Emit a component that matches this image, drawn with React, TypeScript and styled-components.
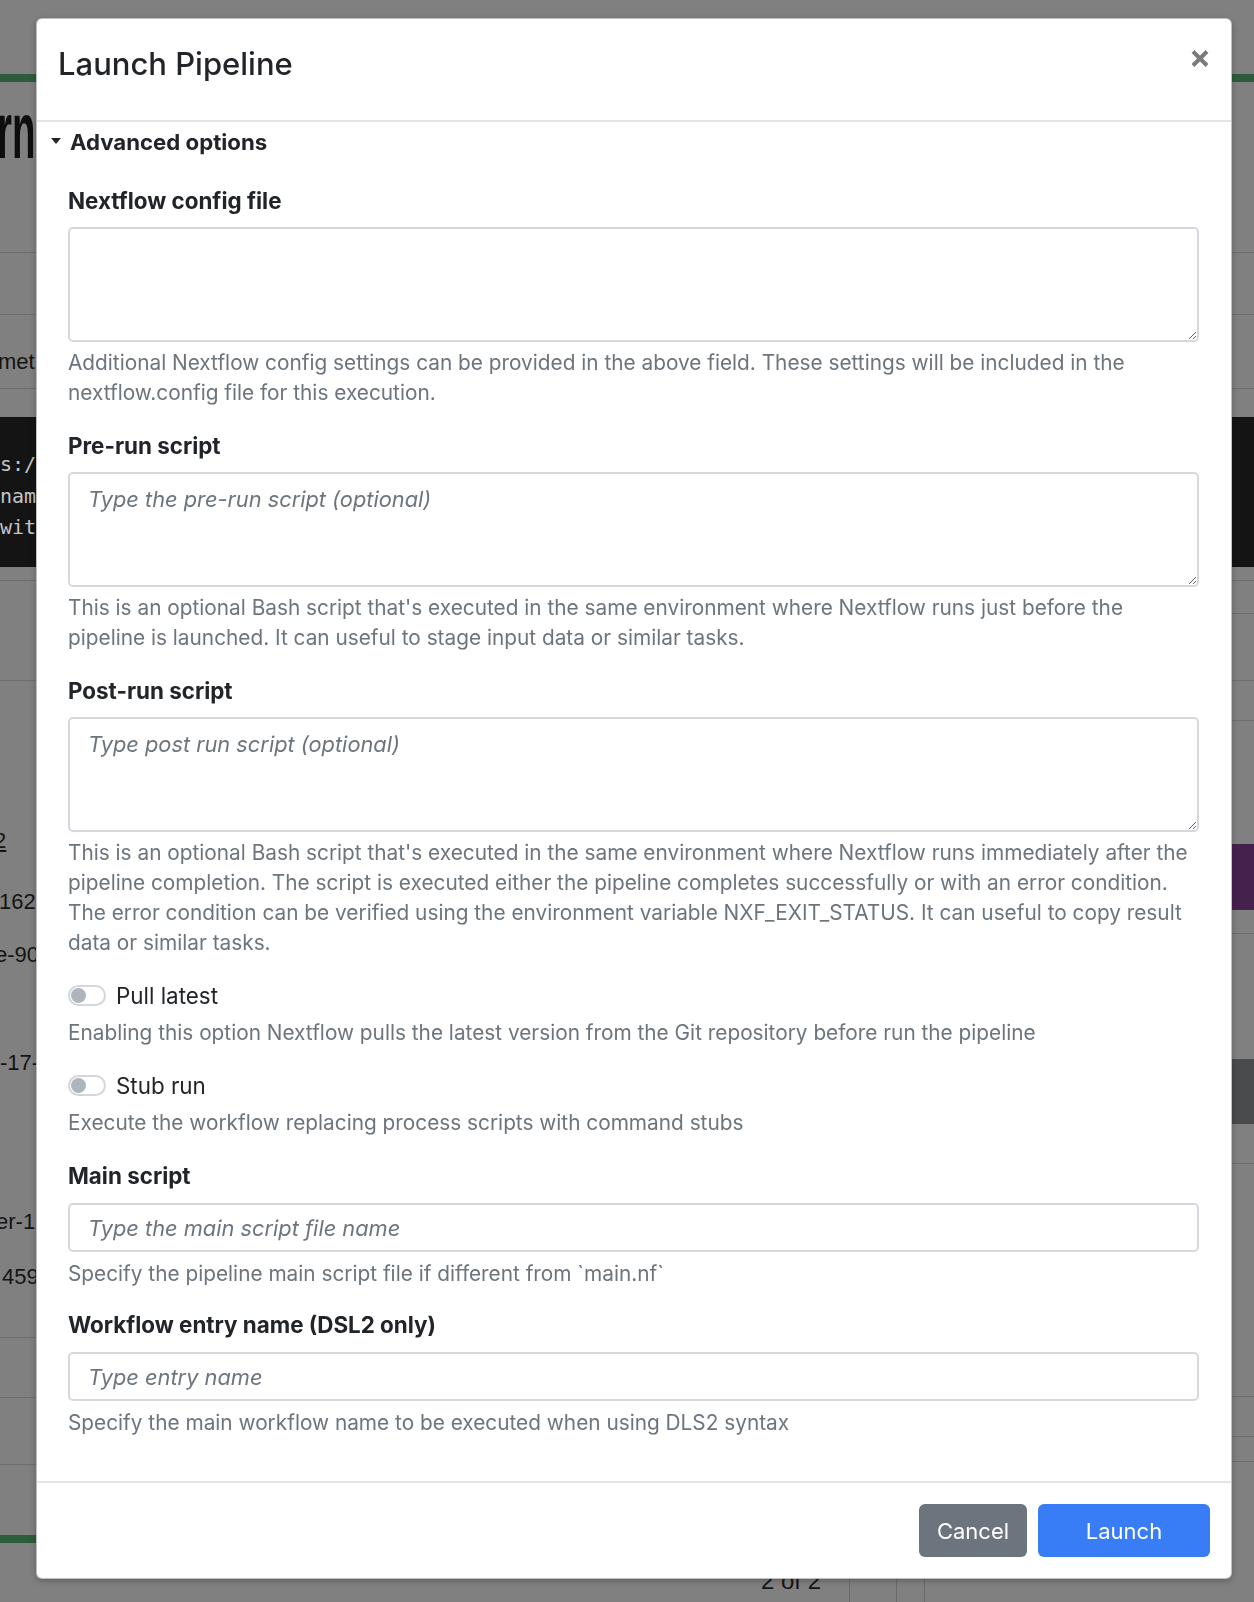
import React from "react";
import styled, { createGlobalStyle } from "styled-components";

const GlobalStyle = createGlobalStyle`
  html, body { margin: 0; padding: 0; }
  body {
    width: 1254px;
    height: 1602px;
    overflow: hidden;
    background: #808080;
    font-family: Inter, "Noto Sans", sans-serif;
  }
  #root { height: 100%; }
  * { box-sizing: border-box; }
`;

/* ---------- dimmed page behind the modal ---------- */

const Page = styled.div`
  display: grid;
  grid-template-columns: 36px 1fr 22px;
  height: 1602px;
  background: #808080;
`;

const Rail = styled.div`
  display: flex;
  flex-direction: column;
  overflow: hidden;
`;

const Gap = styled.div<{ $h: number }>`
  height: ${(p) => p.$h}px;
  flex-shrink: 0;
`;

const Rule = styled.div`
  height: 1px;
  flex-shrink: 0;
  background: #6d6d6d;
`;

const Band = styled.div<{ $h: number; $bg: string }>`
  height: ${(p) => p.$h}px;
  flex-shrink: 0;
  background: ${(p) => p.$bg};
`;

const CodeBand = styled.div`
  height: 150px;
  flex-shrink: 0;
  background: #141414;
  padding-top: 32px;
  display: flex;
  flex-direction: column;
`;

const CodeLine = styled.div`
  font-family: "DejaVu Sans Mono", "Liberation Mono", monospace;
  font-size: 20px;
  line-height: 31.5px;
  color: #c4c4c4;
  white-space: nowrap;
`;

const BigHeading = styled.div`
  font-family: "Liberation Sans", Arial, sans-serif;
  font-size: 80px;
  font-weight: 700;
  line-height: 60px;
  height: 60px;
  color: #0e0e0e;
  white-space: nowrap;
  transform: scaleX(0.48);
  transform-origin: left center;
  margin-left: -3px;
`;

const CellText = styled.div<{ $shift?: number; $underline?: boolean }>`
  font-family: "Liberation Sans", Arial, sans-serif;
  font-size: 22px;
  line-height: 30px;
  height: 30px;
  color: #141414;
  white-space: nowrap;
  margin-left: ${(p) => p.$shift ?? 0}px;
  text-decoration: ${(p) => (p.$underline ? "underline" : "none")};
`;

const Middle = styled.div`
  display: flex;
  flex-direction: column;
  justify-content: flex-end;
`;

const PagerRow = styled.div`
  height: 50px;
  display: flex;
`;

const PagerCell = styled.div<{ $w?: number; $line?: boolean }>`
  width: ${(p) => (p.$w ? `${p.$w}px` : "auto")};
  flex: ${(p) => (p.$w ? "0 0 auto" : "1")};
  border-left: ${(p) => (p.$line ? "1px solid #6a6a6a" : "none")};
  padding-top: 14px;
  font-family: "Liberation Sans", Arial, sans-serif;
  font-size: 24px;
  line-height: 30px;
  color: #151515;
  white-space: nowrap;
`;

/* ---------- modal ---------- */

const Dialog = styled.div`
  position: fixed;
  top: 18px;
  left: 36px;
  width: 1196px;
  background: #fff;
  border: 1px solid rgba(0, 0, 0, 0.25);
  border-radius: 6px;
  box-shadow: 0 2px 6px rgba(0, 0, 0, 0.25);
  display: flex;
  flex-direction: column;
  color: #212529;
`;

const Header = styled.div`
  height: 103px;
  padding: 26px 21px 0 21px;
  border-bottom: 2px solid #e1e4e8;
  display: flex;
  justify-content: space-between;
  align-items: flex-start;
`;

const Title = styled.h5`
  margin: 0;
  font-size: 31px;
  font-weight: 500;
  line-height: 38px;
  color: #212529;
`;

const CloseButton = styled.button`
  margin-top: 4px;
  width: 20px;
  height: 19px;
  padding: 0;
  border: none;
  background: transparent;
  display: flex;
  cursor: pointer;
`;

const Body = styled.div`
  padding: 0 32px 43px 14px;
`;

const Details = styled.details``;

const Summary = styled.summary`
  margin-top: 3px;
  display: flex;
  align-items: center;
  gap: 9px;
  font-size: 22.2px;
  font-weight: 700;
  line-height: 33px;
  list-style: none;
  cursor: pointer;
  &::-webkit-details-marker {
    display: none;
  }
`;

const Caret = styled.span`
  width: 0;
  height: 0;
  border-left: 5.5px solid transparent;
  border-right: 5.5px solid transparent;
  border-top: 6px solid #212529;
  margin-top: -2px;
`;

const Fields = styled.div`
  padding-top: 27px;
  margin-left: 17px;
  display: flex;
  flex-direction: column;
`;

const Group = styled.div<{ $gap?: number }>`
  margin-top: ${(p) => p.$gap ?? 22}px;
  &:first-child {
    margin-top: 0;
  }
`;

const Label = styled.label<{ $mb: number }>`
  display: block;
  font-size: 22.4px;
  font-weight: 700;
  line-height: 32px;
  margin-bottom: ${(p) => p.$mb}px;
  color: #212529;
`;

const fieldBase = `
  width: 100%;
  border: 2px solid #d5d9de;
  border-radius: 5px;
  font-family: Inter, "Noto Sans", sans-serif;
  font-size: 21.8px;
  color: #212529;
  background: #fff;
  outline: none;
  &::placeholder {
    color: #6c757d;
    font-style: italic;
    opacity: 1;
  }
`;

const TextArea = styled.textarea`
  ${fieldBase}
  display: block;
  height: 115px;
  padding: 10px 18px;
  line-height: 30px;
  resize: vertical;
`;

const Input = styled.input`
  ${fieldBase}
  display: block;
  height: 49px;
  padding: 0 18px;
  line-height: 30px;
`;

const Help = styled.div<{ $mt?: number }>`
  margin-top: ${(p) => p.$mt ?? 6}px;
  font-size: 20.8px;
  line-height: 30px;
  color: #6c757d;
`;

const ToggleRow = styled.label`
  display: flex;
  align-items: center;
  gap: 10px;
  height: 30px;
  font-size: 22.4px;
  color: #212529;
  cursor: pointer;
`;

const Switch = styled.span`
  width: 38px;
  height: 21px;
  border: 2px solid #d3d7db;
  border-radius: 11px;
  display: flex;
  align-items: center;
  padding-left: 1px;
  flex-shrink: 0;
`;

const Knob = styled.span`
  width: 15px;
  height: 15px;
  border-radius: 50%;
  background: #adb5bd;
`;

const Footer = styled.div`
  border-top: 2px solid #e1e4e8;
  padding: 21px 21px 21px;
  display: flex;
  justify-content: flex-end;
  gap: 11px;
`;

const Button = styled.button<{ $variant: "secondary" | "primary"; $w: number }>`
  width: ${(p) => p.$w}px;
  height: 53px;
  border: none;
  border-radius: 6px;
  font-family: Inter, "Noto Sans", sans-serif;
  font-size: 22px;
  color: #fff;
  background: ${(p) => (p.$variant === "primary" ? "#387cf6" : "#6c757d")};
  cursor: pointer;
`;

type Field = {
  label: string;
  kind: "textarea" | "input";
  placeholder?: string;
  help: string;
  gap?: number;
};

const topFields: Field[] = [
  {
    label: "Nextflow config file",
    kind: "textarea",
    help: "Additional Nextflow config settings can be provided in the above field. These settings will be included in the nextflow.config file for this execution.",
  },
  {
    label: "Pre-run script",
    kind: "textarea",
    placeholder: "Type the pre-run script (optional)",
    help: "This is an optional Bash script that's executed in the same environment where Nextflow runs just before the pipeline is launched. It can useful to stage input data or similar tasks.",
  },
  {
    label: "Post-run script",
    kind: "textarea",
    placeholder: "Type post run script (optional)",
    help: "This is an optional Bash script that's executed in the same environment where Nextflow runs immediately after the pipeline completion. The script is executed either the pipeline completes successfully or with an error condition. The error condition can be verified using the environment variable NXF_EXIT_STATUS. It can useful to copy result data or similar tasks.",
  },
];

const toggles = [
  {
    label: "Pull latest",
    help: "Enabling this option Nextflow pulls the latest version from the Git repository before run the pipeline",
  },
  {
    label: "Stub run",
    help: "Execute the workflow replacing process scripts with command stubs",
  },
];

const bottomFields: Field[] = [
  {
    label: "Main script",
    kind: "input",
    placeholder: "Type the main script file name",
    help: "Specify the pipeline main script file if different from `main.nf`",
  },
  {
    label: "Workflow entry name (DSL2 only)",
    kind: "input",
    placeholder: "Type entry name",
    help: "Specify the main workflow name to be executed when using DLS2 syntax",
    gap: 20,
  },
];

function FieldGroup({ f }: { f: Field }) {
  const isArea = f.kind === "textarea";
  return (
    <Group $gap={f.gap}>
      <Label $mb={isArea ? 10 : 11}>{f.label}</Label>
      {isArea ? (
        <TextArea placeholder={f.placeholder} />
      ) : (
        <Input placeholder={f.placeholder} />
      )}
      <Help $mt={isArea ? 6 : 7}>{f.help}</Help>
    </Group>
  );
}

function CloseIcon() {
  return (
    <svg width="20" height="19" viewBox="0 0 20 19">
      <path
        d="M3 2.5 L17 16.5 M17 2.5 L3 16.5"
        stroke="#7b7b7b"
        strokeWidth="4"
        strokeLinecap="butt"
      />
    </svg>
  );
}

export default function App() {
  return (
    <>
      <GlobalStyle />
      <Page>
        <Rail>
          <Gap $h={74} />
          <Band $h={8} $bg="#2c5d3b" />
          <Gap $h={19} />
          <BigHeading>rn</BigHeading>
          <Gap $h={91} />
          <Rule />
          <Gap $h={61} />
          <Rule />
          <Gap $h={32} />
          <CellText $shift={-2}>met</CellText>
          <Gap $h={11} />
          <Rule />
          <Gap $h={28} />
          <CodeBand>
            <CodeLine>s:/x</CodeLine>
            <CodeLine>name</CodeLine>
            <CodeLine>with</CodeLine>
          </CodeBand>
          <Gap $h={13} />
          <Rule />
          <Gap $h={99} />
          <Rule />
          <Gap $h={145} />
          <CellText $shift={-6} $underline>2</CellText>
          <Gap $h={31} />
          <CellText $shift={-1}>1620</CellText>
          <Gap $h={23} />
          <CellText $shift={-5}>e-90</CellText>
          <Gap $h={78} />
          <CellText $shift={0}>-17-</CellText>
          <Gap $h={129} />
          <CellText $shift={-4}>er-1</CellText>
          <Gap $h={25} />
          <CellText $shift={2}>4590</CellText>
          <Gap $h={45} />
          <Rule />
          <Gap $h={59} />
          <Rule />
          <Gap $h={66} />
          <Rule />
          <Gap $h={70} />
          <Band $h={8} $bg="#2c5d3b" />
        </Rail>

        <Middle>
          <PagerRow>
            <PagerCell $w={725} />
            <PagerCell $w={88}>2 of 2</PagerCell>
            <PagerCell $w={47} $line />
            <PagerCell $w={28} $line />
            <PagerCell $line />
          </PagerRow>
        </Middle>

        <Rail>
          <Gap $h={74} />
          <Band $h={8} $bg="#2c5d3b" />
          <Gap $h={170} />
          <Rule />
          <Gap $h={61} />
          <Rule />
          <Gap $h={73} />
          <Rule />
          <Gap $h={28} />
          <Band $h={150} $bg="#141414" />
          <Gap $h={13} />
          <Rule />
          <Gap $h={32} />
          <Rule />
          <Gap $h={66} />
          <Rule />
          <Gap $h={39} />
          <Rule />
          <Gap $h={123} />
          <Band $h={66} $bg="#45214e" />
          <Gap $h={23} />
          <Rule />
          <Gap $h={125} />
          <Band $h={65} $bg="#4a4b4d" />
          <Gap $h={39} />
          <Rule />
          <Gap $h={232} />
          <Rule />
          <Gap $h={39} />
          <Rule />
          <Gap $h={24} />
          <Rule />
        </Rail>
      </Page>

      <Dialog role="dialog" aria-labelledby="launch-title">
        <Header>
          <Title id="launch-title">Launch Pipeline</Title>
          <CloseButton aria-label="Close">
            <CloseIcon />
          </CloseButton>
        </Header>
        <Body>
          <Details open>
            <Summary>
              <Caret />
              Advanced options
            </Summary>
            <Fields>
              {topFields.map((f) => (
                <FieldGroup key={f.label} f={f} />
              ))}
              {toggles.map((t) => (
                <Group key={t.label}>
                  <ToggleRow>
                    <Switch>
                      <Knob />
                    </Switch>
                    {t.label}
                  </ToggleRow>
                  <Help $mt={8}>{t.help}</Help>
                </Group>
              ))}
              {bottomFields.map((f) => (
                <FieldGroup key={f.label} f={f} />
              ))}
            </Fields>
          </Details>
        </Body>
        <Footer>
          <Button $variant="secondary" $w={108}>
            Cancel
          </Button>
          <Button $variant="primary" $w={172}>
            Launch
          </Button>
        </Footer>
      </Dialog>
    </>
  );
}
